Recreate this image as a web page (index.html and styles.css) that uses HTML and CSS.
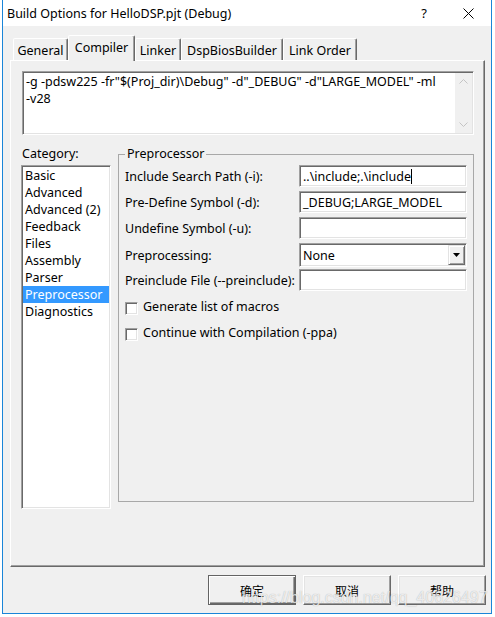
FILE: index.html
```html
<!DOCTYPE html>
<html>
<head>
<meta charset="utf-8">
<title>Build Options</title>
<link rel="stylesheet" href="styles.css">
</head>
<body>
<div class="window">
  <div class="titlebar">
    <span class="title">Build Options for HelloDSP.pjt (Debug)</span>
    <span class="cap-btn cap-help">?</span>
    <span class="cap-btn cap-close"><svg width="11" height="11" viewBox="0 0 11 11"><path d="M0.5 0.5L10.5 10.5M10.5 0.5L0.5 10.5" stroke="#000" stroke-width="1" fill="none"/></svg></span>
  </div>
  <div class="client">
    <div class="tabs">
      <div class="tab tab-general">General</div>
      <div class="tab tab-compiler active">Compiler</div>
      <div class="tab tab-linker">Linker</div>
      <div class="tab tab-bios">DspBiosBuilder</div>
      <div class="tab tab-order">Link Order</div>
    </div>
    <div class="panel">
      <div class="cmdline sunken">
        <div class="cmdtext">-g -pdsw225 -fr"$(Proj_dir)\Debug" -d"_DEBUG" -d"LARGE_MODEL" -ml<br>-v28</div>
        <div class="vscroll">
          <span class="sb-btn"><svg width="9" height="5" viewBox="0 0 9 5"><polyline points="0.5,4.5 4.5,0.5 8.5,4.5" fill="none" stroke="#c4c4c4" stroke-width="1"/></svg></span>
          <span class="sb-btn"><svg width="9" height="5" viewBox="0 0 9 5"><polyline points="0.5,0.5 4.5,4.5 8.5,0.5" fill="none" stroke="#c4c4c4" stroke-width="1"/></svg></span>
        </div>
      </div>
      <div class="lower">
        <div class="category">
          <div class="cat-label">Category:</div>
          <ul class="catlist sunken">
            <li>Basic</li>
            <li>Advanced</li>
            <li>Advanced (2)</li>
            <li>Feedback</li>
            <li>Files</li>
            <li>Assembly</li>
            <li>Parser</li>
            <li class="selected">Preprocessor</li>
            <li>Diagnostics</li>
          </ul>
        </div>
        <fieldset class="group">
          <legend>Preprocessor</legend>
          <div class="row row-first">
            <span class="row-label">Include Search Path (-i):</span>
            <div class="field sunken">..\include;.\include<span class="caret"></span></div>
          </div>
          <div class="row">
            <span class="row-label">Pre-Define Symbol (-d):</span>
            <div class="field sunken">_DEBUG;LARGE_MODEL</div>
          </div>
          <div class="row">
            <span class="row-label">Undefine Symbol (-u):</span>
            <div class="field sunken"></div>
          </div>
          <div class="row row-select">
            <span class="row-label">Preprocessing:</span>
            <div class="select sunken">
              <span class="select-value">None</span>
              <span class="select-btn"><svg width="7" height="4" viewBox="0 0 7 4"><polygon points="0,0 7,0 3.5,4" fill="#000"/></svg></span>
            </div>
          </div>
          <div class="row row-after-select">
            <span class="row-label">Preinclude File (--preinclude):</span>
            <div class="field sunken"></div>
          </div>
          <div class="check-row check-first">
            <span class="checkbox sunken"></span>
            <span class="check-text">Generate list of macros</span>
          </div>
          <div class="check-row">
            <span class="checkbox sunken"></span>
            <span class="check-text">Continue with Compilation (-ppa)</span>
          </div>
        </fieldset>
      </div>
    </div>
    <div class="buttons">
      <button class="btn btn-default">确定</button>
      <button class="btn">取消</button>
      <button class="btn">帮助</button>
    </div>
  </div>
  <div class="watermark">https://blog.csdn.net/qq_40626497</div>
</div>
</body>
</html>
```
FILE: styles.css
```css
* { box-sizing: border-box; }

html, body {
  margin: 0;
  padding: 0;
  background: #fff;
}

body {
  font-family: "Noto Sans", "Liberation Sans", sans-serif;
  font-size: 12.5px;
  color: #000;
}

.window {
  position: relative;
  margin-left: 2px;
  width: 490px;
  height: 614px;
  border: 1px solid #1a85d8;
  border-top: 0;
  display: flex;
  flex-direction: column;
}

.titlebar {
  flex: none;
  height: 26px;
  background: #fff;
  display: flex;
  align-items: center;
  padding-left: 4px;
}

.title { flex: 1; white-space: nowrap; }

.cap-btn {
  height: 26px;
  display: flex;
  align-items: center;
  justify-content: center;
}

.cap-help { width: 42px; font-size: 13px; }
.cap-close { width: 46px; }

.client {
  flex: 1;
  background: #f0f0f0;
  padding-top: 9px;
  display: flex;
  flex-direction: column;
}

/* tabs */
.tabs {
  display: flex;
  align-items: flex-end;
  height: 25px;
  margin-left: 10px;
}

.tab {
  height: 22px;
  display: flex;
  align-items: center;
  justify-content: center;
  white-space: nowrap;
  background: #f0f0f0;
  border: 1px solid;
  border-bottom: 0;
  border-color: #fff #696969 transparent #fff;
  border-radius: 2px 2px 0 0;
  box-shadow: inset -1px 0 0 #a0a0a0;
  padding-top: 1px;
}

.tab.active {
  position: relative;
  z-index: 1;
  height: 26px;
  margin-bottom: -1px;
  padding-top: 0;
  padding-bottom: 3px;
}

.tab-general { width: 55px; }
.tab-compiler { width: 67px; }
.tab-linker { width: 46px; }
.tab-bios { width: 102px; }
.tab-order { width: 74px; }

/* panel */
.panel {
  flex: none;
  margin-left: 7px;
  width: 475px;
  height: 507px;
  border: 1px solid;
  border-color: #fff #696969 #696969 #fff;
  box-shadow: inset -1px -1px 0 #a0a0a0;
  padding: 10px 0 0 10px;
}

.sunken {
  border: 1px solid;
  border-color: #a0a0a0 #fff #fff #a0a0a0;
  box-shadow: inset 1px 1px 0 #696969, inset -1px -1px 0 #e3e3e3;
}

.cmdline {
  margin-left: 1px;
  width: 452px;
  height: 64px;
  background: #fff;
  padding: 1px;
  display: flex;
}

.cmdtext {
  flex: 1;
  padding-left: 2px;
  line-height: 17px;
  white-space: nowrap;
  overflow: hidden;
}

.vscroll {
  width: 17px;
  background: #f0f0f0;
  display: flex;
  flex-direction: column;
  justify-content: space-between;
}

.sb-btn {
  height: 17px;
  display: flex;
  align-items: center;
  justify-content: center;
}

.lower {
  display: flex;
  margin-top: 11px;
}

.category {
  flex: none;
  width: 90px;
}

.cat-label {
  height: 16px;
  line-height: 16px;
  padding-left: 1px;
}

.catlist {
  list-style: none;
  margin: 3px 0 0;
  padding: 1px;
  height: 344px;
  background: #fff;
}

.catlist li {
  height: 17px;
  line-height: 17px;
  padding-left: 2px;
  white-space: nowrap;
}

.catlist li.selected {
  background: #3399ff;
  color: #fff;
}

.group {
  margin: 0 0 0 7px;
  width: 356px;
  height: 356px;
  border: 1px solid #a8a8a8;
  padding: 0 6px;
  min-width: 0;
}

.group legend {
  padding: 0 2px;
  height: 16px;
  line-height: 16px;
}

.row {
  display: flex;
  align-items: center;
  height: 22px;
  margin-top: 4px;
}

.row-first { margin-top: 3px; }
.row-select { height: 24px; }
.row-after-select { margin-top: 2px; }

.row-label {
  flex: none;
  width: 174px;
  white-space: nowrap;
}

.field {
  width: 168px;
  height: 22px;
  background: #fff;
  padding-left: 3px;
  display: flex;
  align-items: center;
  white-space: nowrap;
}

.caret {
  display: inline-block;
  width: 1px;
  height: 15px;
  background: #000;
}

.select {
  width: 168px;
  height: 24px;
  background: #fff;
  padding: 1px;
  display: flex;
}

.select-value {
  flex: 1;
  padding-left: 2px;
  display: flex;
  align-items: center;
}

.select-btn {
  width: 17px;
  background: #f0f0f0;
  border: 1px solid;
  border-color: #e3e3e3 #696969 #696969 #e3e3e3;
  box-shadow: inset 1px 1px 0 #fff, inset -1px -1px 0 #a0a0a0;
  display: flex;
  align-items: center;
  justify-content: center;
}

.check-row {
  display: flex;
  align-items: center;
  gap: 5px;
  height: 20px;
  margin-top: 6px;
}

.check-first { margin-top: 7px; }

.check-text { padding-bottom: 3px; }

.checkbox {
  flex: none;
  width: 13px;
  height: 13px;
  background: #fff;
}

/* buttons */
.buttons {
  display: flex;
  justify-content: flex-end;
  gap: 7px;
  margin-top: 8px;
  padding-right: 5px;
}

.btn {
  width: 88px;
  height: 30px;
  padding: 0;
  font-family: "Noto Sans CJK SC", "Noto Sans", sans-serif;
  font-size: 12px;
  color: #000;
  background: #f0f0f0;
  border: 1px solid;
  border-color: #fff #696969 #696969 #fff;
  box-shadow: inset -1px -1px 0 #a0a0a0, inset 1px 1px 0 #e3e3e3;
}

.btn-default {
  border-color: #646464;
  box-shadow: inset 1px 1px 0 #fff, inset -1px -1px 0 #696969, inset -2px -2px 0 #a0a0a0;
}

.watermark {
  position: absolute;
  left: 239px;
  top: 589px;
  font-family: "Liberation Sans", Arial, sans-serif;
  font-size: 16px;
  color: rgba(255, 255, 255, 0.75);
  text-shadow: 0 0 1px rgba(0, 0, 0, 0.3);
  white-space: nowrap;
  pointer-events: none;
}
```
